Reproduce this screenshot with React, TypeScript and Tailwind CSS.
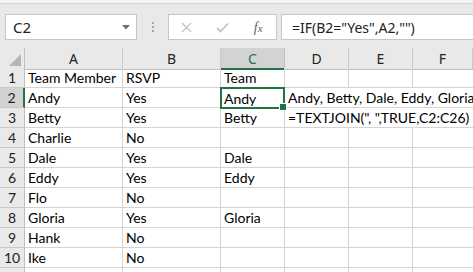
import React from "react";

const cols = ["A", "B", "C", "D", "E", "F"];
const rows: [string, string, string][] = [
  ["Team Member", "RSVP", "Team"],
  ["Andy", "Yes", "Andy"],
  ["Betty", "Yes", "Betty"],
  ["Charlie", "No", ""],
  ["Dale", "Yes", "Dale"],
  ["Eddy", "Yes", "Eddy"],
  ["Flo", "No", ""],
  ["Gloria", "Yes", "Gloria"],
  ["Hank", "No", ""],
  ["Ike", "No", ""],
  ["", "", ""],
];

const cellFont = { fontFamily: "Lato, 'Noto Sans', sans-serif" };

export default function App() {
  return (
    <div className="w-[473px] h-[272px] overflow-hidden bg-white flex flex-col" style={{ fontFamily: "'Noto Sans', 'Open Sans', sans-serif" }}>
      {/* formula bar area */}
      <div className="h-[48px] shrink-0 bg-[#e9e9e9] flex flex-col">
        <div className="h-[3px] bg-[#f4f4f4] border-b border-[#d6d6d6] box-content"></div>
        <div className="flex items-start pt-[10px] pl-[5px]">
          <div className="w-[132px] h-[26px] bg-white border border-[#c6c6c6] flex items-center justify-between pl-[7px] pr-[5px]">
            <span className="text-[15px] text-[#222]">C2</span>
            <svg width="9" height="5" viewBox="0 0 9 5"><path d="M0 0 H8 L4 4.5 Z" fill="#6e6e6e" /></svg>
          </div>
          <div className="w-[31px] h-[26px] flex flex-col items-center justify-center gap-[2px]">
            <div className="w-[2px] h-[2px] bg-[#a8a8a8]"></div>
            <div className="w-[2px] h-[2px] bg-[#a8a8a8]"></div>
            <div className="w-[2px] h-[2px] bg-[#a8a8a8]"></div>
          </div>
          <div className="w-[109px] h-[26px] bg-white border border-[#c6c6c6] flex items-center">
            <div className="w-[36px] flex justify-center">
              <svg width="11" height="11" viewBox="0 0 11 11"><path d="M1 1 L10 10 M10 1 L1 10" stroke="#c4c4c4" strokeWidth="1.4" /></svg>
            </div>
            <div className="w-[36px] flex justify-center">
              <svg width="13" height="11" viewBox="0 0 13 11"><path d="M1 6 L4.5 9.5 L12 1.5" stroke="#c4c4c4" strokeWidth="1.8" fill="none" /></svg>
            </div>
            <div className="w-[36px] flex justify-center">
              <span className="text-[14px] italic text-[#5f5f5f]" style={{ fontFamily: "'Liberation Serif', serif" }}>f<span className="text-[11px]">x</span></span>
            </div>
          </div>
          <div className="ml-[4px] flex-1 h-[26px] bg-white border border-r-0 border-[#c6c6c6] flex items-center pl-[10px]">
            <span className="text-[14px] text-[#222] whitespace-nowrap">=IF(B2="Yes",A2,"")</span>
          </div>
        </div>
      </div>

      {/* grid */}
      <div className="grid grid-cols-[25px_98px_98px_64px_64px_64px_1fr] auto-rows-[20px]">
        {/* header row */}
        <div className="h-[22px] bg-[#e9e9e9] border-r border-b border-[#bfbfbf] flex items-end justify-end p-[3px]">
          <svg width="12" height="12" viewBox="0 0 12 12"><path d="M12 0 V12 H0 Z" fill="#b5b5b5" /></svg>
        </div>
        {cols.map((c) => (
          <div
            key={c}
            className={
              c === "C"
                ? "h-[22px] bg-[#d3d3d3] border-r border-[#bfbfbf] border-b-2 border-b-[#217346] flex items-center justify-center text-[14px] text-[#217346]"
                : "h-[22px] bg-[#e9e9e9] border-r border-b border-[#c9c9c9] border-b-[#bfbfbf] flex items-center justify-center text-[14px] text-[#222]"
            }
          >
            {c}
          </div>
        ))}

        {rows.map((r, i) => {
          const n = i + 1;
          const sel = n === 2;
          const overflow = n === 2 ? "Andy, Betty, Dale, Eddy, Gloria" : n === 3 ? '=TEXTJOIN(", ",TRUE,C2:C26)' : null;
          return (
            <React.Fragment key={n}>
              <div
                className={
                  sel
                    ? "bg-[#d3d3d3] border-r-2 border-r-[#217346] border-b border-b-[#c9c9c9] flex items-center justify-center text-[14px] text-[#222]"
                    : "bg-[#e9e9e9] border-r border-r-[#bfbfbf] border-b border-b-[#c9c9c9] flex items-center justify-center text-[14px] text-[#222]"
                }
                style={cellFont}
              >
                {n <= 10 ? n : ""}
              </div>
              <div className="border-r border-b border-[#d4d4d4] pl-[3px] flex items-center text-[14px] text-black whitespace-nowrap overflow-hidden" style={cellFont}>{r[0]}</div>
              <div className="border-r border-b border-[#d4d4d4] pl-[3px] flex items-center text-[14px] text-black whitespace-nowrap overflow-hidden" style={cellFont}>{r[1]}</div>
              <div
                className={
                  sel
                    ? "relative border-2 border-[#217346] -mt-[1px] -ml-[1px] h-[22px] pl-[2px] flex items-center text-[14px] text-black whitespace-nowrap z-10"
                    : "border-r border-b border-[#d4d4d4] pl-[3px] flex items-center text-[14px] text-black whitespace-nowrap overflow-hidden"
                }
                style={cellFont}
              >
                {r[2]}
                {sel && (
                  <div className="absolute -right-[4px] -bottom-[4px] w-[6px] h-[6px] bg-[#217346] border border-white box-content"></div>
                )}
              </div>
              {overflow ? (
                <div className="col-span-3 border-b border-[#d4d4d4] pl-[3px] flex items-center text-[14px] text-black whitespace-nowrap overflow-hidden" style={cellFont}>
                  {overflow}
                </div>
              ) : (
                <>
                  <div className="border-r border-b border-[#d4d4d4]"></div>
                  <div className="border-r border-b border-[#d4d4d4]"></div>
                  <div className="border-b border-[#d4d4d4]"></div>
                </>
              )}
            </React.Fragment>
          );
        })}
      </div>
    </div>
  );
}
